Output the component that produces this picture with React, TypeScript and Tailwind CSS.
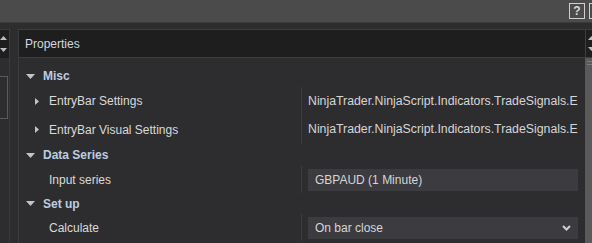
import React from 'react';

type Row =
    | { kind: 'cat'; label: string; h: string }
    | { kind: 'prop'; label: string; value: string; expand?: boolean; box?: 'text' | 'select'; h: string };

const rows: Row[] = [
    { kind: 'cat', label: 'Misc', h: 'h-[22px]' },
    { kind: 'prop', label: 'EntryBar Settings', value: 'NinjaTrader.NinjaScript.Indicators.TradeSignals.E', expand: true, h: 'h-[28px]' },
    { kind: 'prop', label: 'EntryBar Visual Settings', value: 'NinjaTrader.NinjaScript.Indicators.TradeSignals.E', expand: true, h: 'h-[29px]' },
    { kind: 'cat', label: 'Data Series', h: 'h-[22px]' },
    { kind: 'prop', label: 'Input series', value: 'GBPAUD (1 Minute)', box: 'text', h: 'h-[27px]' },
    { kind: 'cat', label: 'Set up', h: 'h-[21px]' },
    { kind: 'prop', label: 'Calculate', value: 'On bar close', box: 'select', h: 'h-[27px]' },
];

function DownTri() {
    return (
        <svg width="9" height="5" viewBox="0 0 9 5" className="shrink-0">
            <path d="M0 0 H9 L4.5 5 Z" fill="#c4c4c4" />
        </svg>
    );
}

function RightTri() {
    return (
        <svg width="4" height="7" viewBox="0 0 4 7" className="shrink-0">
            <path d="M0 0 L4 3.5 L0 7 Z" fill="#c4c4c4" />
        </svg>
    );
}

function Arrows() {
    return (
        <div className="flex h-full flex-col justify-between py-[6px]">
            <svg width="7" height="4" viewBox="0 0 7 4">
                <path d="M0 4 L3.5 0 L7 4 Z" fill="#bdbdbd" />
            </svg>
            <svg width="7" height="4" viewBox="0 0 7 4">
                <path d="M0 0 H7 L3.5 4 Z" fill="#bdbdbd" />
            </svg>
        </div>
    );
}

function PropertyRow({ row }: { row: Row }) {
    if (row.kind === 'cat') {
        return (
            <div className={`flex items-center ${row.h}`}>
                <div className="flex w-[16px] justify-end">
                    <DownTri />
                </div>
                <span className="ml-[8px] text-[12px] font-bold text-[#bccde2]">
                    {row.label}
                </span>
            </div>
        );
    }
    return (
        <div className={`flex items-center ${row.h}`}>
            <div className="flex w-[282px] items-center">
                <div className="flex w-[20px] justify-end">
                    {row.expand && <RightTri />}
                </div>
                <span className="ml-[10px] text-[12px] text-[#dadada]">{row.label}</span>
            </div>
            <div className="h-full w-px bg-[#3c3c40]" />
            <div className="flex flex-1 items-center pl-[6px] pr-[7px]">
                {row.box ? (
                    <div className="flex h-[22px] flex-1 items-center justify-between bg-[#3b3b40] pl-[7px] pr-[7px]">
                        <span className="text-[12px] text-[#d6d6d6]">{row.value}</span>
                        {row.box === 'select' && (
                            <svg width="9" height="6" viewBox="0 0 9 6">
                                <path d="M1 1 L4.5 4.5 L8 1" stroke="#cfcfcf" strokeWidth="2" fill="none" />
                            </svg>
                        )}
                    </div>
                ) : (
                    <span className="overflow-hidden whitespace-nowrap text-[12.3px] text-[#d6d6d6]">
                        {row.value}
                    </span>
                )}
            </div>
        </div>
    );
}

export default function App() {
    return (
        <div
            className="flex h-[243px] w-[592px] flex-col overflow-hidden bg-[#2d2d30]"
            style={{ fontFamily: '"Liberation Sans", Arial, sans-serif' }}
        >
            <div className="flex h-[22px] shrink-0 items-start justify-end gap-[4px] bg-[#4b4b4b] pt-[3px]">
                <div className="flex h-[16px] w-[16px] items-center justify-center border border-[#cfcfcf] text-[12px] font-bold leading-none text-[#d8d8d8]">
                    ?
                </div>
                <div className="h-[16px] w-[3px] border-y border-l border-[#cfcfcf]" />
            </div>
            <div className="h-px shrink-0 bg-[#3a3a3a]" />
            <div className="h-[6px] shrink-0 bg-[#2d2d30]" />
            <div className="flex min-h-0 flex-1">
                <div className="flex w-[10px] shrink-0 flex-col border-r border-[#3b3b3e]">
                    <div className="flex h-[29px] shrink-0 items-stretch border-t border-[#3b3b3e] bg-[#1e1e1e]">
                        <Arrows />
                    </div>
                    <div className="pt-[18px]">
                        <div className="h-[43px] w-[8px] border-y border-r border-[#5a5a5a]" />
                    </div>
                </div>
                <div className="w-[8px] shrink-0" />
                <div className="flex min-w-0 flex-1 flex-col border-l border-t border-[#3c3c3f]">
                    <div className="flex h-[28px] shrink-0 border-b border-[#3e3e42] bg-[#1e1e1e]">
                        <div className="flex flex-1 items-center pl-[6px] text-[12px] text-[#d2d8e0]">
                            Properties
                        </div>
                        <div className="flex w-[7px] border-l border-[#3e3e42] pl-[2px]">
                            <Arrows />
                        </div>
                    </div>
                    <div className="flex min-h-0 flex-1">
                        <div className="flex flex-1 flex-col pt-[7px]">
                            {rows.map((row, index) => (
                                <PropertyRow row={row} key={index} />
                            ))}
                        </div>
                        <div className="flex w-[7px] flex-col bg-[#5a5a5a] pt-[3px] pl-[2px]">
                            <div className="h-px w-[5px] bg-[#7a7a7a]" />
                            <div className="mt-[2px] h-px w-[5px] bg-[#7a7a7a]" />
                        </div>
                    </div>
                </div>
            </div>
        </div>
    );
}
